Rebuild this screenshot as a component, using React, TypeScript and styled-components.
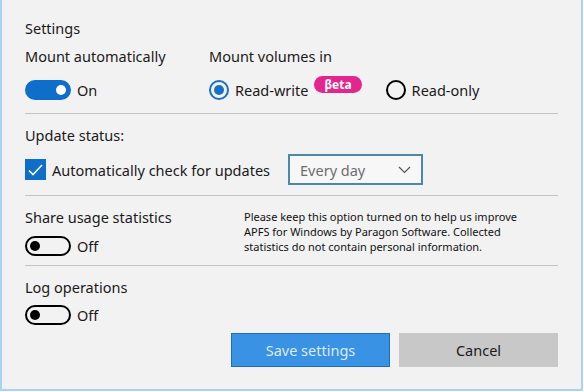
import styled, { createGlobalStyle } from 'styled-components';

const GlobalStyle = createGlobalStyle`
  html, body {
    margin: 0;
    padding: 0;
    background: #ffffff;
  }
  body {
    font-family: 'Noto Sans', 'Open Sans', sans-serif;
    color: #1a1a1a;
  }
`;

const Window = styled.div`
  box-sizing: border-box;
  width: 583px;
  height: 391px;
  background: #f2f2f2;
  border-left: 2px solid #a9d3ee;
  border-right: 2px solid #a9d3ee;
  border-bottom: 2px solid #a9d3ee;
  padding: 18px 23px 0 23px;
  display: flex;
  flex-direction: column;
`;

const Title = styled.div`
  font-size: 14.5px;
  line-height: 20px;
  margin-bottom: 8px;
`;

const Label = styled.div`
  font-size: 14.5px;
  line-height: 20px;
`;

const Section = styled.div<{ $pb?: number }>`
  border-bottom: 1px solid #c4c4c4;
  padding-bottom: ${(p) => p.$pb ?? 10}px;
  margin-bottom: 11px;
`;

const Columns = styled.div`
  display: flex;
  align-items: flex-start;
`;

const Column = styled.div<{ $w?: number; $gap?: number }>`
  width: ${(p) => (p.$w ? `${p.$w}px` : 'auto')};
  display: flex;
  flex-direction: column;
  gap: ${(p) => p.$gap ?? 13}px;
`;

const Row = styled.div<{ $h?: number }>`
  display: flex;
  align-items: center;
  gap: 6px;
  font-size: 14.5px;
  height: ${(p) => p.$h ?? 22}px;
`;

const Track = styled.span<{ $on: boolean }>`
  box-sizing: border-box;
  width: 46px;
  height: 20px;
  border-radius: 10px;
  display: inline-flex;
  align-items: center;
  padding: 0 3px;
  justify-content: ${(p) => (p.$on ? 'flex-end' : 'flex-start')};
  background: ${(p) => (p.$on ? '#0f6ec9' : 'transparent')};
  border: 2px solid ${(p) => (p.$on ? '#0f6ec9' : '#000')};
`;

const Knob = styled.span<{ $on: boolean }>`
  width: 10px;
  height: 10px;
  border-radius: 50%;
  background: ${(p) => (p.$on ? '#fff' : '#000')};
`;

function Toggle({ on }: { on: boolean }) {
  return (
    <Row>
      <Track $on={on}>
        <Knob $on={on} />
      </Track>
      <span>{on ? 'On' : 'Off'}</span>
    </Row>
  );
}

const RadioCircle = styled.span<{ $on: boolean }>`
  box-sizing: border-box;
  width: 20px;
  height: 20px;
  border-radius: 50%;
  border: 2px solid ${(p) => (p.$on ? '#1670c6' : '#000')};
  display: inline-flex;
  align-items: center;
  justify-content: center;

  &::after {
    content: '';
    display: ${(p) => (p.$on ? 'block' : 'none')};
    width: 10px;
    height: 10px;
    border-radius: 50%;
    background: #1670c6;
  }
`;

const Beta = styled.span`
  display: inline-block;
  background: #e3258d;
  color: #fff;
  font-weight: 700;
  font-size: 12px;
  line-height: 17px;
  padding: 0 10px;
  border-radius: 9px;
  margin-top: -11px;
  margin-right: 18px;
`;

const Checkbox = styled.span`
  box-sizing: border-box;
  width: 21px;
  height: 21px;
  background: #0f6ec9;
  display: inline-flex;
  align-items: center;
  justify-content: center;
`;

const Select = styled.div`
  box-sizing: border-box;
  width: 135px;
  height: 31px;
  margin-left: 12px;
  border: 2px solid #4b88ae;
  background: #f7f7f7;
  color: #6d6d6d;
  display: flex;
  align-items: center;
  justify-content: space-between;
  padding: 0 10px;
  font-size: 14.5px;
`;

const Note = styled.div`
  font-size: 11px;
  line-height: 15px;
  color: #111;
  margin-top: 2px;
`;

const Buttons = styled.div`
  display: flex;
  justify-content: flex-end;
  gap: 9px;
  margin-top: 7px;
`;

const Button = styled.button<{ $primary?: boolean }>`
  box-sizing: border-box;
  width: 159px;
  height: 34px;
  font-family: inherit;
  font-size: 14.5px;
  border: 1px solid ${(p) => (p.$primary ? '#1f6fbd' : '#c8c8c8')};
  background: ${(p) => (p.$primary ? '#3a92e4' : '#c8c8c8')};
  color: ${(p) => (p.$primary ? '#d9ecfb' : '#1a1a1a')};
`;

export default function App() {
  return (
    <>
      <GlobalStyle />
      <Window>
        <Title>Settings</Title>
        <Section $pb={12}>
          <Columns>
            <Column $w={184}>
              <Label>Mount automatically</Label>
              <Toggle on />
            </Column>
            <Column>
              <Label>Mount volumes in</Label>
              <Row>
                <RadioCircle $on />
                <span>Read-write</span>
                <Beta>βeta</Beta>
                <RadioCircle $on={false} />
                <span>Read-only</span>
              </Row>
            </Column>
          </Columns>
        </Section>
        <Section $pb={10}>
          <Column $gap={9}>
            <Label>Update status:</Label>
            <Row $h={31}>
              <Checkbox>
                <svg width="15" height="12" viewBox="0 0 15 12">
                  <path d="M1 6.5 L5 10.5 L14 1" fill="none" stroke="#fff" strokeWidth="1.6" />
                </svg>
              </Checkbox>
              <span>Automatically check for updates</span>
              <Select>
                <span>Every day</span>
                <svg width="13" height="8" viewBox="0 0 13 8">
                  <path d="M1 1 L6.5 6.5 L12 1" fill="none" stroke="#555" strokeWidth="1.2" />
                </svg>
              </Select>
            </Row>
          </Column>
        </Section>
        <Section $pb={8}>
          <Columns>
            <Column $w={219} $gap={8}>
              <Label>Share usage statistics</Label>
              <Toggle on={false} />
            </Column>
            <Note>
              Please keep this option turned on to help us improve
              <br />
              APFS for Windows by Paragon Software. Collected
              <br />
              statistics do not contain personal information.
            </Note>
          </Columns>
        </Section>
        <Column $gap={7}>
          <Label>Log operations</Label>
          <Toggle on={false} />
        </Column>
        <Buttons>
          <Button $primary>Save settings</Button>
          <Button>Cancel</Button>
        </Buttons>
      </Window>
    </>
  );
}
